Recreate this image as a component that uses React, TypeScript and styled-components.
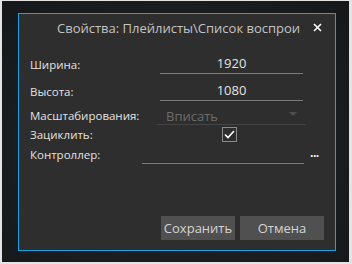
import styled, { createGlobalStyle } from 'styled-components';

const GlobalStyle = createGlobalStyle`
  html, body {
    margin: 0;
    padding: 0;
    background: #e4e4e4;
  }
  body {
    font-family: 'Open Sans', 'Noto Sans', sans-serif;
  }
`;

const Frame = styled.div`
  width: 352px;
  height: 264px;
  box-sizing: border-box;
  padding: 1px 3px 2px 2px;
  background: #e4e4e4;
`;

const Backdrop = styled.div`
  height: 100%;
  box-sizing: border-box;
  padding: 12px 0 0 16px;
  background: radial-gradient(ellipse at 50% 55%, #25282b 0%, #1c1f22 55%, #15181b 100%);
`;

const Dialog = styled.div`
  width: 318px;
  height: 238px;
  box-sizing: border-box;
  border: 1px solid #1ba1e2;
  background: #2e2e2e;
  display: flex;
  flex-direction: column;
`;

const TitleBar = styled.div`
  height: 28px;
  display: flex;
  align-items: center;
  padding: 0 13px 0 38px;
`;

const Title = styled.div`
  flex: 1;
  white-space: nowrap;
  color: #c4c4c4;
  font-size: 13px;
`;

const Close = styled.button`
  width: 9px;
  height: 9px;
  padding: 0;
  border: 0;
  background: transparent;
  display: flex;
  margin-top: -2px;
`;

const Form = styled.div`
  display: flex;
  flex-direction: column;
  padding: 12px 0 0 11px;
`;

const Row = styled.div<{ $top: number; $h: number }>`
  display: flex;
  align-items: center;
  margin-top: ${(p) => p.$top}px;
  height: ${(p) => p.$h}px;
`;

const Label = styled.div<{ $w: number }>`
  width: ${(p) => p.$w}px;
  flex-shrink: 0;
  color: #e2e2e2;
  font-size: 11.5px;
  white-space: nowrap;
`;

const TextInput = styled.div<{ $w: number }>`
  width: ${(p) => p.$w}px;
  height: 20px;
  box-sizing: border-box;
  border-bottom: 1px solid #7c7c7c;
  color: #e4e4e4;
  font-size: 13px;
  text-align: center;
  line-height: 19px;
`;

const Combo = styled.div`
  width: 149px;
  height: 20px;
  box-sizing: border-box;
  border-bottom: 1px solid #444444;
  display: flex;
  align-items: center;
  justify-content: space-between;
  padding: 2px 9px 0 9px;
  color: #6c6c6c;
  font-size: 13px;
`;

const Arrow = styled.span`
  width: 0;
  height: 0;
  border-left: 4px solid transparent;
  border-right: 4px solid transparent;
  border-top: 4px solid #4e4e4e;
  margin-top: -4px;
`;

const CheckBox = styled.div`
  width: 15px;
  height: 15px;
  box-sizing: border-box;
  border: 1px solid #8a8a8a;
  display: flex;
  align-items: center;
  justify-content: center;
`;

const Dots = styled.span`
  margin-left: 6px;
  color: #f0f0f0;
  font-size: 12px;
  font-weight: 700;
  letter-spacing: -0.5px;
  margin-top: -4px;
`;

const Footer = styled.div`
  margin-top: auto;
  display: flex;
  justify-content: flex-end;
  gap: 5px;
  padding: 0 11px 10px 0;
`;

const Button = styled.button<{ $w: number }>`
  width: ${(p) => p.$w}px;
  height: 24px;
  border: 0;
  padding: 0;
  background: #505050;
  color: #d4d4d4;
  font-family: 'Open Sans', 'Noto Sans', sans-serif;
  font-size: 13px;
`;

export default function App() {
  return (
    <>
      <GlobalStyle />
      <Frame>
        <Backdrop>
          <Dialog>
            <TitleBar>
              <Title>Свойства: Плейлисты\Список воспрои</Title>
              <Close>
                <svg width="9" height="9" viewBox="0 0 9 9">
                  <path d="M1 1L8 8M8 1L1 8" stroke="#ffffff" strokeWidth="1.6" />
                </svg>
              </Close>
            </TitleBar>
            <Form>
              <Row $top={0} $h={20}>
                <Label $w={130}>Ширина:</Label>
                <TextInput $w={143}>1920</TextInput>
              </Row>
              <Row $top={7} $h={20}>
                <Label $w={130}>Высота:</Label>
                <TextInput $w={143}>1080</TextInput>
              </Row>
              <Row $top={4} $h={20}>
                <Label $w={127}>Масштабирования:</Label>
                <Combo>
                  Вписать
                  <Arrow />
                </Combo>
              </Row>
              <Row $top={0} $h={18}>
                <Label $w={192}>Зациклить:</Label>
                <CheckBox>
                  <svg width="11" height="9" viewBox="0 0 11 9">
                    <path d="M1 4.5L4 7.5L10 1" stroke="#ffffff" strokeWidth="1.6" fill="none" />
                  </svg>
                </CheckBox>
              </Row>
              <Row $top={1} $h={20}>
                <Label $w={112}>Контроллер:</Label>
                <TextInput $w={162}></TextInput>
                <Dots>...</Dots>
              </Row>
            </Form>
            <Footer>
              <Button $w={74}>Сохранить</Button>
              <Button $w={84}>Отмена</Button>
            </Footer>
          </Dialog>
        </Backdrop>
      </Frame>
    </>
  );
}
